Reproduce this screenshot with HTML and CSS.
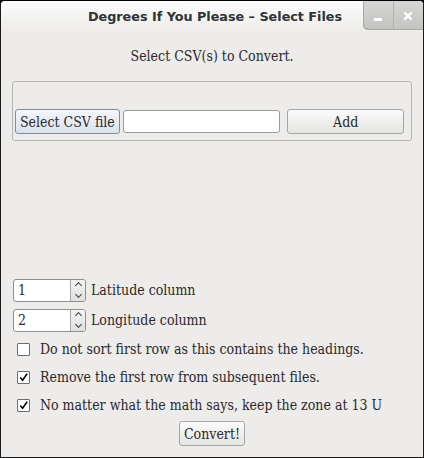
FILE: index.html
```html
<!DOCTYPE html>
<html>
<head>
<meta charset="utf-8">
<link rel="stylesheet" href="styles.css">
</head>
<body>
<div class="window">
  <div class="titlebar">
    <div class="title">Degrees If You Please – Select Files</div>
    <div class="wm-buttons">
      <div class="wm-btn"><span class="min-glyph"></span></div>
      <div class="wm-btn">
        <svg width="10" height="10" viewBox="0 0 10 10"><path d="M2 2 L8 8 M8 2 L2 8" stroke="#ffffff" stroke-width="2.2" stroke-linecap="square"/></svg>
      </div>
    </div>
  </div>
  <div class="content">
    <div class="heading">Select CSV(s) to Convert.</div>
    <div class="group">
      <div class="file-row">
        <button class="btn btn-focus">Select CSV file</button>
        <div class="text-input"></div>
        <button class="btn btn-add">Add</button>
      </div>
    </div>
    <div class="spacer"></div>
    <div class="spin-row">
      <div class="spinner"><div class="spin-val">1</div><div class="spin-arrows"><span class="arr up"></span><span class="arr down"></span></div></div>
      <span class="label">Latitude column</span>
    </div>
    <div class="spin-row">
      <div class="spinner"><div class="spin-val">2</div><div class="spin-arrows"><span class="arr up"></span><span class="arr down"></span></div></div>
      <span class="label">Longitude column</span>
    </div>
    <div class="check-row"><span class="check"></span><span class="label">Do not sort first row as this contains the headings.</span></div>
    <div class="check-row"><span class="check"><svg width="12" height="12" viewBox="0 0 12 12"><path d="M2.5 6.5 L5 9.5 L10 2.5" fill="none" stroke="#000" stroke-width="1.6"/></svg></span><span class="label">Remove the first row from subsequent files.</span></div>
    <div class="check-row"><span class="check"><svg width="12" height="12" viewBox="0 0 12 12"><path d="M2.5 6.5 L5 9.5 L10 2.5" fill="none" stroke="#000" stroke-width="1.6"/></svg></span><span class="label">No matter what the math says, keep the zone at 13 U</span></div>
    <div class="convert-row"><button class="btn btn-convert">Convert!</button></div>
  </div>
</div>
</body>
</html>
```
FILE: styles.css
```css
* { box-sizing: border-box; }
html, body { margin: 0; padding: 0; background: #000; }
body { width: 424px; height: 458px; }
.window {
  width: 424px; height: 458px;
  background: #edeceb;
  border: 1px solid #1a1a1a;
  border-top-color: #000;
  border-radius: 5px 5px 0 0;
  display: flex; flex-direction: column;
  overflow: hidden;
  font-family: "DejaVu Serif Condensed", "DejaVu Serif", serif;
  font-size: 14px;
  color: #2a2a2a;
  position: relative;
}
.titlebar {
  height: 30px; flex: none;
  background: linear-gradient(#fbfbfb, #edeceb);
  display: flex; align-items: center; position: relative;
}
.title {
  flex: 1; text-align: center; padding-left: 6px;
  font-family: "DejaVu Sans", sans-serif; font-weight: bold; font-size: 12.75px;
  color: #2e3436;
  padding-top: 1px;
}
.wm-buttons {
  position: absolute; right: 0; top: 0;
  height: 29px; width: 60px;
  display: flex;
  border-radius: 0 0 0 5px;
  background: linear-gradient(#d6d6d4, #c3c3c1);
  box-shadow: inset 1px -1px 0 #a9a9a7;
}
.wm-btn { flex: 1; display: flex; align-items: center; justify-content: center; }
.wm-btn + .wm-btn { border-left: 1px solid #b0b0ae; }
.min-glyph { width: 8px; height: 3px; background: #fff; margin-top: 8px; }
.content { flex: 1; display: flex; flex-direction: column; padding: 0 11px 11px 11px; }
.heading { text-align: center; margin-top: 16px; height: 18px; line-height: 18px; }
.group {
  margin-top: 16px; height: 60px;
  border: 1px solid #b5b5b3; border-radius: 3px;
  padding: 27px 7px 0 2px;
}
.file-row { display: flex; align-items: center; }
.btn {
  font-family: inherit; font-size: 14px; color: #2a2a2a;
  border: 1px solid #a6a6a4; border-radius: 3px;
  background: linear-gradient(#fbfbfb, #e4e4e2);
  height: 25px; padding: 0; margin: 0;
}
.btn-focus { width: 105px; border-color: #6f8fbf; background: linear-gradient(#f3f6fa, #dbe2ec); }
.text-input {
  width: 158px; height: 23px; margin-left: 3px;
  background: #fff; border: 1px solid #9a9a98; border-radius: 3px;
}
.btn-add { width: 117px; margin-left: 7px; }
.spacer { flex: 1; }
.spin-row { display: flex; align-items: center; height: 22px; margin-bottom: 8px; }
.spinner {
  width: 73px; height: 23px; margin-left: 1px; display: flex;
  background: #fff; border: 1px solid #8f8f8d; border-radius: 3px; overflow: hidden;
}
.spin-val { flex: 1; padding-left: 4px; line-height: 21px; }
.spin-arrows {
  width: 15px; border-left: 1px solid #a8a8a6;
  background: linear-gradient(#f4f4f3, #e0e0de);
  display: flex; flex-direction: column; align-items: center; justify-content: center; gap: 4px;
}
.arr { width: 5px; height: 5px; border: solid #444; border-width: 1.3px 0 0 1.3px; }
.arr.up { transform: rotate(45deg); margin-top: 2px; }
.arr.down { transform: rotate(225deg); margin-bottom: 2px; }
.spin-row .label { margin-left: 5px; }
.check-row { display: flex; align-items: center; height: 20px; margin-bottom: 8px; }
.check {
  width: 13px; height: 13px; margin-left: 5px; flex: none;
  background: #fff; border: 1px solid #6d6d6b; border-radius: 1px;
  display: flex; align-items: center; justify-content: center;
}
.check-row .label { margin-left: 10px; }
.convert-row { display: flex; justify-content: center; margin-top: -2px; }
.btn-convert { width: 66px; height: 25px; padding: 0; margin-left: 0px; }
```
